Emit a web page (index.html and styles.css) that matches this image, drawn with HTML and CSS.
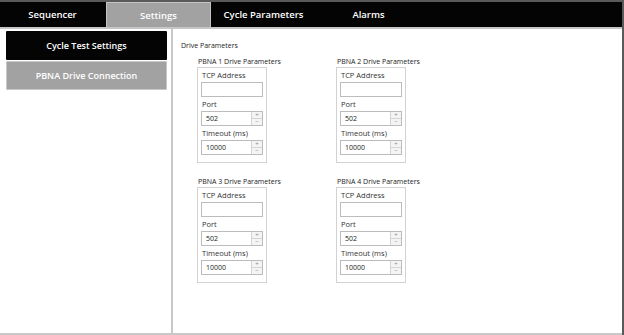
FILE: index.html
```html
<!DOCTYPE html>
<html lang="en">
<head>
  <meta charset="UTF-8" />
  <meta name="viewport" content="width=device-width, initial-scale=1.0" />
  <title>Settings</title>
  <link rel="stylesheet" href="styles.css">
</head>
<body>
  <div class="app">
    <div class="tabs">
      <div class="tab">Sequencer</div>
      <div class="tab active">Settings</div>
      <div class="tab">Cycle Parameters</div>
      <div class="tab">Alarms</div>
    </div>
    <div class="main">
      <div class="sidebar">
        <div class="side-btn">Cycle Test Settings</div>
        <div class="side-btn inactive">PBNA Drive Connection</div>
      </div>
      <div class="content">
        <div class="heading">Drive Parameters</div>
        <div class="grid">
          <div class="group">
            <div class="group-title">PBNA 1 Drive Parameters</div>
            <div class="box">
              <div class="label">TCP Address</div>
              <div class="input"></div>
              <div class="label">Port</div>
              <div class="input spin"><span class="val">502</span><span class="arrows"><span>+</span><span>&minus;</span></span></div>
              <div class="label">Timeout (ms)</div>
              <div class="input spin"><span class="val">10000</span><span class="arrows"><span>+</span><span>&minus;</span></span></div>
            </div>
          </div>
          <div class="group">
            <div class="group-title">PBNA 2 Drive Parameters</div>
            <div class="box">
              <div class="label">TCP Address</div>
              <div class="input"></div>
              <div class="label">Port</div>
              <div class="input spin"><span class="val">502</span><span class="arrows"><span>+</span><span>&minus;</span></span></div>
              <div class="label">Timeout (ms)</div>
              <div class="input spin"><span class="val">10000</span><span class="arrows"><span>+</span><span>&minus;</span></span></div>
            </div>
          </div>
          <div class="group">
            <div class="group-title">PBNA 3 Drive Parameters</div>
            <div class="box">
              <div class="label">TCP Address</div>
              <div class="input"></div>
              <div class="label">Port</div>
              <div class="input spin"><span class="val">502</span><span class="arrows"><span>+</span><span>&minus;</span></span></div>
              <div class="label">Timeout (ms)</div>
              <div class="input spin"><span class="val">10000</span><span class="arrows"><span>+</span><span>&minus;</span></span></div>
            </div>
          </div>
          <div class="group">
            <div class="group-title">PBNA 4 Drive Parameters</div>
            <div class="box">
              <div class="label">TCP Address</div>
              <div class="input"></div>
              <div class="label">Port</div>
              <div class="input spin"><span class="val">502</span><span class="arrows"><span>+</span><span>&minus;</span></span></div>
              <div class="label">Timeout (ms)</div>
              <div class="input spin"><span class="val">10000</span><span class="arrows"><span>+</span><span>&minus;</span></span></div>
            </div>
          </div>
        </div>
      </div>
    </div>
  </div>
</body>
</html>
```

FILE: styles.css
```css
body {
  margin: 0;
  background-color: white;
  font-family: "Open Sans", "Noto Sans", sans-serif;
  color: #222;
}

.app {
  width: 624px;
  height: 335px;
  box-sizing: border-box;
  border-top: 2px solid #5a5a5a;
  border-right: 2px solid #5a5a5a;
  display: flex;
  flex-direction: column;
}

.tabs {
  height: 25px;
  background-color: #040404;
  border-bottom: 2px solid #c6c6c6;
  display: flex;
}

.tab {
  width: 105px;
  color: white;
  font-size: 9.5px;
  font-weight: 600;
  display: flex;
  justify-content: center;
  align-items: center;
}

.tab.active {
  width: 103px;
  margin-left: 1px;
  background-color: #a2a2a2;
  border: 1px solid #c4c4c4;
  border-bottom: none;
}

.main {
  flex: 1;
  display: flex;
  border-bottom: 2px solid #c8c8c8;
}

.sidebar {
  width: 161px;
  padding: 2px 4px 0 6px;
  border-right: 2px solid #c8c8c8;
  display: flex;
  flex-direction: column;
  gap: 1px;
}

.side-btn {
  height: 29px;
  background-color: #040404;
  color: white;
  font-size: 9px;
  font-weight: 600;
  display: flex;
  justify-content: center;
  align-items: center;
  border-radius: 1px;
}

.side-btn.inactive {
  height: 27px;
  background-color: #a2a2a2;
  border: 1px solid #c8c8c8;
}

.content {
  flex: 1;
  padding: 11px 0 0 8px;
}

.heading {
  font-size: 7px;
  height: 12px;
  line-height: 12px;
}

.grid {
  display: grid;
  grid-template-columns: 139px 139px;
  row-gap: 14px;
  margin: 5px 0 0 16px;
}

.group-title {
  font-size: 7px;
  height: 10px;
  line-height: 10px;
  padding-left: 1px;
}

.box {
  width: 62px;
  border: 1px solid #d2d2d2;
  padding: 1px 3px 6px 3px;
  display: flex;
  flex-direction: column;
}

.label {
  font-size: 7.5px;
  color: #333;
  height: 13px;
  line-height: 13px;
  padding-left: 1px;
}

.input {
  height: 13px;
  border: 1px solid #bcbcbc;
  background-color: white;
  margin-bottom: 1px;
  display: flex;
}

.val {
  flex: 1;
  font-size: 7px;
  line-height: 13px;
  padding-left: 4px;
  color: #222;
}

.arrows {
  width: 10px;
  border-left: 1px solid #d4d4d4;
  display: flex;
  flex-direction: column;
}

.arrows span {
  flex: 1;
  font-size: 6px;
  line-height: 6px;
  text-align: center;
  color: #888;
  background-color: #f4f4f4;
}

.arrows span + span {
  border-top: 1px solid #d4d4d4;
}
```
